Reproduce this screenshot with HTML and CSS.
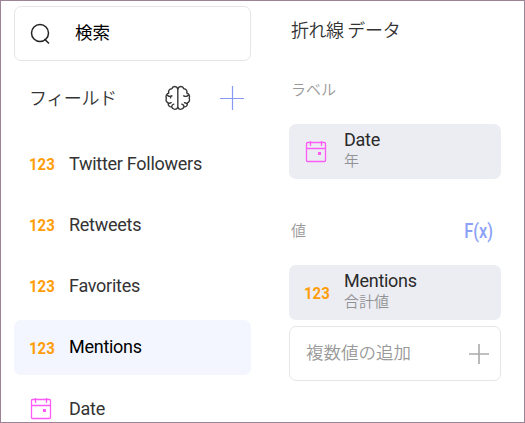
FILE: index.html
```
<!DOCTYPE html>
<html lang="ja">
<head>
<meta charset="utf-8">
<title>折れ線 データ</title>
<link rel="stylesheet" href="styles.css">
</head>
<body>
<svg width="0" height="0" class="defs">
  <symbol id="calendar" viewBox="0 0 22 24">
    <path d="M1.5 3.5q0-1 1-1h17q1 0 1 1v17q0 1-1 1h-17q-1 0-1-1zM1.5 8.5h19M5.5 1v5M16.5 1v5" fill="none" stroke="#fc5bf7" stroke-width="1.3"/>
    <rect x="13" y="12" width="3" height="3" fill="#fc5bf7"/>
  </symbol>
</svg>
<main class="frame">
  <section class="fields">
    <div class="search">
      <svg class="search-icon" width="22" height="24" viewBox="0 0 22 24"><circle cx="10" cy="11" r="8.5"/><path d="M14.5 17 19 21.5"/></svg>
      <span class="search-text">検索</span>
    </div>
    <header class="fields-head">
      <h2 class="fields-title">フィールド</h2>
      <svg class="brain" width="26" height="26" viewBox="0 0 26 26">
        <path d="M12.8 3.2V22.8M12.8 4C11.8 .8 7.7.7 6.8 3.8 4.4 3.9 3.1 5.8 3.8 8 1.7 8.8.4 11 1.4 13.2.4 15.4 1.6 17.3 3.3 18 2.9 20.4 4.3 22 6.7 22.1 7.8 25.2 11.8 25 12.8 22.2M2.6 10.4c1.2 1.1 2.7 1.3 4.4.5M5.6 12.8c-.3-1 .1-1.6.6-2M3.3 18c1.1.4 2 .2 2.8-.3M6.7 22c-.1-1.7.7-2.5 2.1-2.9"/>
        <path d="M12.8 4C13.8.8 17.9.7 18.8 3.8 21.2 3.9 22.5 5.8 21.8 8 23.9 8.8 25.2 11 24.2 13.2 25.2 15.4 24 17.3 22.3 18 22.7 20.4 21.3 22 18.9 22.1 17.8 25.2 13.8 25 12.8 22.2M23 10.4c-1.2 1.1-2.7 1.3-4.4.5M22.3 18c-1.1.4-2 .2-2.8-.3M18.9 22c.1-1.7-.7-2.5-2.1-2.9"/>
      </svg>
      <svg class="plus plus-blue" width="24" height="24" viewBox="0 0 24 24"><path d="M12.5 0v24M0 12.5h24"/></svg>
    </header>
    <ul class="list">
      <li class="row"><span class="num">123</span><span>Twitter Followers</span></li>
      <li class="row"><span class="num">123</span><span>Retweets</span></li>
      <li class="row"><span class="num">123</span><span>Favorites</span></li>
      <li class="row selected"><span class="num">123</span><span>Mentions</span></li>
      <li class="row last"><svg class="cal" width="22" height="24"><use href="#calendar"/></svg><span>Date</span></li>
    </ul>
  </section>
  <section class="data">
    <h1 class="data-title"><span class="kanji">折れ線</span> <span class="kana">データ</span></h1>
    <h3 class="label label-kana">ラベル</h3>
    <div class="card">
      <svg class="cal" width="22" height="24"><use href="#calendar"/></svg>
      <div class="card-text"><div class="name">Date</div><div class="sub">年</div></div>
    </div>
    <div class="values-head"><h3 class="label">値</h3><span class="fx">F(x)</span></div>
    <div class="card">
      <span class="num">123</span>
      <div class="card-text"><div class="name">Mentions</div><div class="sub">合計値</div></div>
    </div>
    <div class="add"><span class="add-text">複数値の追加</span>
      <svg class="plus plus-grey" width="20" height="20" viewBox="0 0 20 20"><path d="M10 0v20M0 10h20"/></svg>
    </div>
  </section>
</main>
</body>
</html>
```
FILE: styles.css
```
* { box-sizing: border-box; margin: 0; padding: 0; }
body { background: #fff; overflow: hidden; }
.defs { position: absolute; }
.frame {
  display: flex;
  gap: 38px;
  width: 525px;
  height: 423px;
  padding: 5px 0 0 13px;
  border: 1px solid #9a8496;
  overflow: hidden;
  color: #333;
  font: 18px/20px Roboto, "Noto Sans CJK JP", sans-serif;
  letter-spacing: -0.27px;
}
h1, h2, h3 { font-family: "Noto Sans CJK JP", sans-serif; white-space: nowrap; }
.fields { width: 237px; flex: none; }
.data { width: 212px; flex: none; }
.search {
  display: flex;
  align-items: center;
  height: 55px;
  padding-left: 15px;
  border: 1px solid #e5e5e5;
  border-radius: 7px;
  color: #000;
}
.search-icon { margin: 0; fill: none; stroke: #222; stroke-width: 1.5; }
.search-text { margin: -4px 0 0 23px; font: 400 17.5px/24px "Noto Sans CJK JP", sans-serif; letter-spacing: 0; }
.fields-head { display: flex; align-items: center; height: 76px; padding: 0 7px 2px 15px; }
.fields-title { width: 136px; padding-bottom: 3px; font-size: 18px; line-height: 26px; font-weight: 350; letter-spacing: -0.4px; }
.brain { fill: none; stroke: #383838; stroke-width: 1.4; stroke-linecap: round; stroke-linejoin: round; }
.plus { fill: none; flex: none; }
.plus-blue { margin-left: auto; stroke: #8799f5; stroke-width: 1.2; }
.plus-grey { margin-left: auto; stroke: #aaa; stroke-width: 1.6; }
.list { list-style: none; display: grid; gap: 6px; }
.row { display: flex; align-items: center; height: 55px; padding: 0 0 1px 15px; border-radius: 7px; }
.last { padding-bottom: 0; }
.num {
  width: 40px;
  flex: none;
  color: #ff9d0a;
  font-size: 17px;
  font-weight: 700;
  letter-spacing: 0;
  transform: scaleX(0.88);
  transform-origin: 0 50%;
}
.card .num { padding-top: 1px; }
.cal { width: 22px; margin: 1px 17px 0 1px; flex: none; }
.selected { background: #f3f6fe; color: #000; }
.selected .num { padding-top: 1px; }
.data-title { height: 72px; padding: 10px 0 0 2px; font-size: 18px; line-height: 26px; font-weight: 350; }
.kanji { letter-spacing: -0.5px; }
.kana { letter-spacing: -0.3px; }
.label { padding-left: 2px; color: #999; font-size: 15px; line-height: 22px; font-weight: 350; letter-spacing: 0; }
.label-kana { height: 46px; }
.card { display: flex; align-items: center; height: 55px; padding-left: 15px; border-radius: 7px; background: #ecedf3; }
.card-text { padding-bottom: 4px; }
.name { line-height: 20px; color: #2a2a2a; }
.sub { color: #929295; font: 350 15px/20px "Noto Sans CJK JP", sans-serif; letter-spacing: 0; }
.values-head { display: flex; align-items: center; justify-content: space-between; height: 86px; padding: 16px 8px 0 0; }
.fx {
  padding-top: 1px;
  color: #8ba0f7;
  font-size: 20px;
  font-weight: 500;
  letter-spacing: 0;
  transform: scaleX(0.82);
  transform-origin: 100% 50%;
}
.add { display: flex; align-items: center; height: 55px; margin-top: 6px; padding: 0 11px 0 16px; border: 1px solid #e6e6e6; border-radius: 7px; }
.add-text { padding-bottom: 3px; color: #999; font: 350 17.5px/24px "Noto Sans CJK JP", sans-serif; letter-spacing: 0; }
```
